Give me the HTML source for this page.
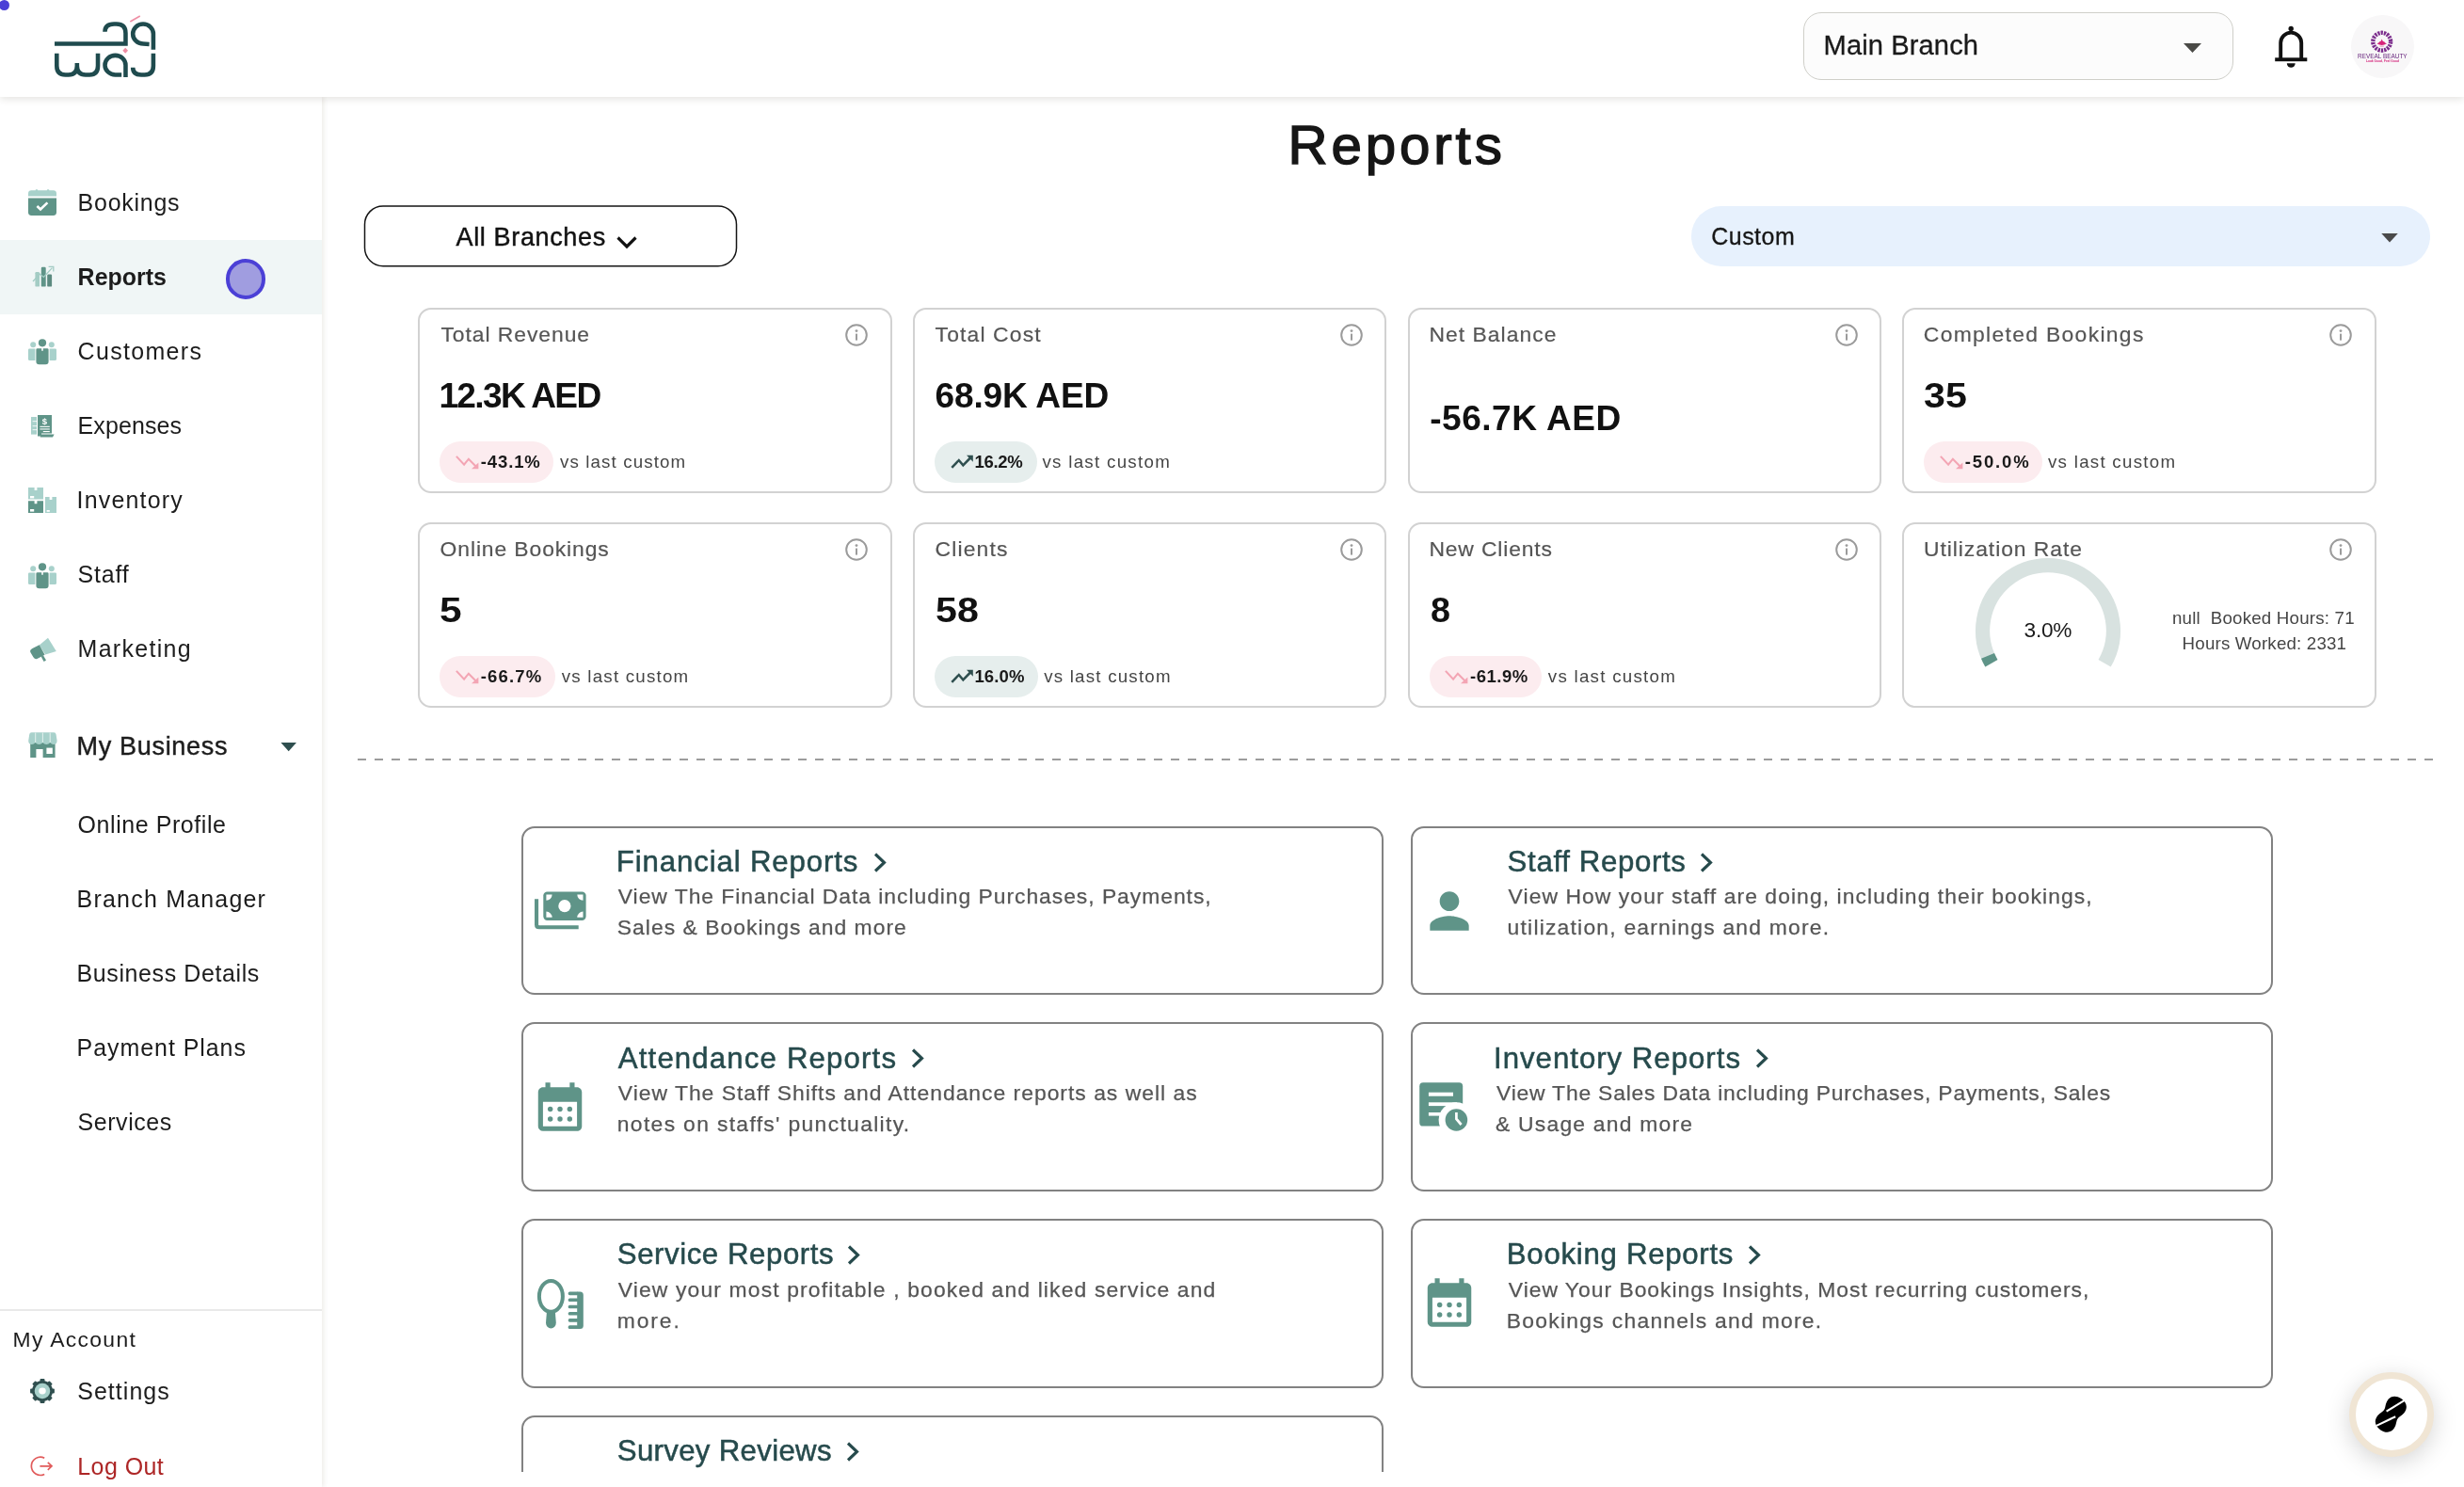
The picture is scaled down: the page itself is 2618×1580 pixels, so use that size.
<!DOCTYPE html>
<html lang="en">
<head>
<meta charset="utf-8">
<title>Reports</title>
<style>
*{box-sizing:border-box;margin:0;padding:0}
html,body{width:2618px;height:1580px;overflow:hidden;background:#fff}
body{font-family:"Liberation Sans",sans-serif;color:#1c1c1c}
#app{will-change:transform;position:relative;width:2618px;height:1580px;overflow:hidden;background:#fff}
.t{position:absolute;line-height:1;white-space:nowrap}
.abs{position:absolute}
#main{position:absolute;left:342px;top:103px;width:2276px;height:1461px;overflow:hidden}
#sidebar{position:absolute;left:0;top:103px;width:342px;height:1477px;background:#fff;box-shadow:2px 0 5px rgba(90,70,40,.10)}
#header{position:absolute;left:0;top:0;width:2618px;height:103px;background:#fff;box-shadow:0 2px 8px rgba(60,50,30,.14)}
.scard{position:absolute;width:503.4px;height:197px;border:2px solid #d2d2d2;border-radius:14px;background:#fff}
.rcard{position:absolute;width:916px;height:179.5px;border:2px solid #828282;border-radius:14px;background:#fff}
.badge{position:absolute;height:43.6px;border-radius:22px}
.badge.dn{background:#fcecef}
.badge.up{background:#e6eeed}
svg{position:absolute;overflow:visible}

</style>
</head>
<body>
<div id="app">
<!-- ======= MAIN SHAPES ======= -->
<svg style="left:386px;top:217px" width="399" height="68"><rect x="1.5" y="1.9" width="395" height="63.8" rx="19.5" fill="#fff" stroke="#151515" stroke-width="1.5"/></svg>
<svg style="left:655px;top:251px" width="22" height="13" viewBox="0 0 22 13"><path d="M1.5 1.5 L11 11 L20.5 1.5" fill="none" stroke="#111" stroke-width="3.2" stroke-linecap="butt" stroke-linejoin="miter"/></svg>
<div class="abs" style="left:1797px;top:219px;width:785px;height:64px;border-radius:32px;background:#e7f1fd"></div>
<svg style="left:2530px;top:247.6px" width="18" height="9.6" viewBox="0 0 20 11"><path d="M0 0 H20 L10 11 Z" fill="#4a4a4a"/></svg>

<!-- stat cards -->
<div class="scard" style="left:444.2px;top:327px"></div>
<div class="scard" style="left:970.0px;top:327px"></div>
<div class="scard" style="left:1495.8px;top:327px"></div>
<div class="scard" style="left:2021.4px;top:327px"></div>
<div class="scard" style="left:444.2px;top:555px"></div>
<div class="scard" style="left:970.0px;top:555px"></div>
<div class="scard" style="left:1495.8px;top:555px"></div>
<div class="scard" style="left:2021.4px;top:555px"></div>

<!-- info icons -->
<svg width="0" height="0"><defs>
<g id="info"><circle cx="12" cy="12" r="10.8" fill="none" stroke="#9b9b9b" stroke-width="2"/><circle cx="12" cy="7.6" r="1.4" fill="#9b9b9b"/><rect x="11" y="10.6" width="2" height="7" fill="#9b9b9b"/></g>
<g id="tdown"><path d="M0.9 0.9 L9.1 9.6 L13.9 3.7 L21.6 11.5" fill="none" stroke="#f3a5b4" stroke-width="2.1" stroke-linejoin="miter"/><path d="M24.4 7.4 V14.3 H17 Z" fill="#f3a5b4"/></g>
<g id="tup"><path d="M1.3 12.9 L8.8 5 L13.3 10.3 L21 2.5" fill="none" stroke="#2f4f4f" stroke-width="2.5" stroke-linejoin="miter"/><path d="M17 -0.3 H23.8 V6.7 Z" fill="#2f4f4f"/></g>
<g id="chev"><path d="M2 1.5 L11.5 10.5 L2 19.5" fill="none" stroke="#264a4c" stroke-width="3.1" stroke-linejoin="miter"/></g>
</defs></svg>
<svg style="left:898.3px;top:343.5px" width="24" height="24"><use href="#info"/></svg>
<svg style="left:1424.3px;top:343.5px" width="24" height="24"><use href="#info"/></svg>
<svg style="left:1949.8px;top:343.5px" width="24" height="24"><use href="#info"/></svg>
<svg style="left:2475.3px;top:343.5px" width="24" height="24"><use href="#info"/></svg>
<svg style="left:898.3px;top:571.5px" width="24" height="24"><use href="#info"/></svg>
<svg style="left:1424.3px;top:571.5px" width="24" height="24"><use href="#info"/></svg>
<svg style="left:1949.8px;top:571.5px" width="24" height="24"><use href="#info"/></svg>
<svg style="left:2475.3px;top:571.5px" width="24" height="24"><use href="#info"/></svg>

<!-- badges -->
<div class="badge dn" style="left:467.4px;top:469.3px;width:120.8px"></div>
<svg style="left:484px;top:483.5px" width="26" height="15"><use href="#tdown"/></svg>
<div class="badge up" style="left:993.4px;top:469.3px;width:108.6px"></div>
<svg style="left:1010px;top:483.5px" width="25" height="15"><use href="#tup"/></svg>
<div class="badge dn" style="left:2044.4px;top:469.3px;width:125.6px"></div>
<svg style="left:2061px;top:483.5px" width="26" height="15"><use href="#tdown"/></svg>
<div class="badge dn" style="left:467.4px;top:697.3px;width:123px"></div>
<svg style="left:484px;top:711.5px" width="26" height="15"><use href="#tdown"/></svg>
<div class="badge up" style="left:993.4px;top:697.3px;width:110px"></div>
<svg style="left:1010px;top:711.5px" width="25" height="15"><use href="#tup"/></svg>
<div class="badge dn" style="left:1518.8px;top:697.3px;width:119.6px"></div>
<svg style="left:1535.4px;top:711.5px" width="26" height="15"><use href="#tdown"/></svg>

<!-- gauge -->
<svg style="left:2090px;top:585px" width="172" height="130" viewBox="-86 -85 172 130">
<path d="M -60.1 34.7 A 69.4 69.4 0 1 1 60.1 34.7" fill="none" stroke="#d8e2e0" stroke-width="15.2"/>
<path d="M -60.1 34.7 A 69.4 69.4 0 0 1 -64.0 26.9" fill="none" stroke="#5f9488" stroke-width="15.2"/>
</svg>

<!-- dashed divider -->
<svg style="left:380px;top:806px" width="2206" height="3"><line x1="0" y1="1.1" x2="2205" y2="1.1" stroke="#9c9c9c" stroke-width="2" stroke-dasharray="9 9"/></svg>

<!-- report cards -->
<div class="rcard" style="left:554px;top:877.5px"></div>
<div class="rcard" style="left:1499px;top:877.5px"></div>
<div class="rcard" style="left:554px;top:1086.3px"></div>
<div class="rcard" style="left:1499px;top:1086.3px"></div>
<div class="rcard" style="left:554px;top:1295.1px"></div>
<div class="rcard" style="left:1499px;top:1295.1px"></div>
<div class="rcard" style="left:554px;top:1504px"></div>

<!-- chevrons -->
<svg style="left:927.6px;top:905.5px" width="14" height="21"><use href="#chev"/></svg>
<svg style="left:1806.4px;top:905.5px" width="14" height="21"><use href="#chev"/></svg>
<svg style="left:967.7px;top:1114.3px" width="14" height="21"><use href="#chev"/></svg>
<svg style="left:1864.9px;top:1114.3px" width="14" height="21"><use href="#chev"/></svg>
<svg style="left:900.3px;top:1323.1px" width="14" height="21"><use href="#chev"/></svg>
<svg style="left:1857px;top:1323.1px" width="14" height="21"><use href="#chev"/></svg>
<svg style="left:899.2px;top:1531.9px" width="14" height="21"><use href="#chev"/></svg>

<!-- ======= REPORT CARD ICONS ======= -->
<!-- financial -->
<svg style="left:568px;top:947px" width="56" height="42" viewBox="0 0 56 42">
<rect x="9.3" y="0.4" width="45.3" height="30.6" rx="4.2" fill="#5f9488"/>
<circle cx="31.9" cy="15.7" r="6.6" fill="#fff"/>
<path d="M12.4 3.6 h6.2 a6.2 6.2 0 0 1 -6.2 6.2 z M51.5 3.6 v6.2 a6.2 6.2 0 0 1 -6.2 -6.2 z M12.4 27.8 v-6.2 a6.2 6.2 0 0 1 6.2 6.2 z M51.5 27.8 h-6.2 a6.2 6.2 0 0 1 6.2 -6.2 z" fill="#fff"/>
<path d="M2.05 8.2 V35.4 Q2.05 38.2 4.9 38.2 H46.7" fill="none" stroke="#5f9488" stroke-width="4.1"/>
</svg>
<!-- staff person -->
<svg style="left:1509.4px;top:937.3px" width="62" height="62" viewBox="0 0 24 24"><path fill="#5f9488" d="M12 12c2.21 0 4-1.79 4-4s-1.79-4-4-4-4 1.79-4 4 1.79 4 4 4zm0 2c-2.67 0-8 1.34-8 4v2h16v-2c0-2.66-5.33-4-8-4z"/></svg>
<!-- calendars -->
<svg width="0" height="0"><defs><g id="cal">
<path fill="#5f9488" d="M19 4h-1V2h-2v2H8V2H6v2H5c-1.11 0-1.99.9-1.99 2L3 20a2 2 0 0 0 2 2h14c1.1 0 2-.9 2-2V6c0-1.1-.9-2-2-2zm0 16H5V10h14v10z"/>
<g fill="#5f9488"><circle cx="8" cy="13" r="1.05"/><circle cx="12" cy="13" r="1.05"/><circle cx="16" cy="13" r="1.05"/><circle cx="8" cy="17" r="1.05"/><circle cx="12" cy="17" r="1.05"/><circle cx="16" cy="17" r="1.05"/></g>
</g></defs></svg>
<svg style="left:564.3px;top:1145px" width="62" height="62" viewBox="0 0 24 24"><use href="#cal"/></svg>
<svg style="left:1509.3px;top:1353.3px" width="62" height="62" viewBox="0 0 24 24"><use href="#cal"/></svg>
<!-- inventory doc + clock -->
<svg style="left:1508px;top:1150px" width="54" height="54" viewBox="0 0 54 54">
<rect x="0.2" y="0.3" width="46" height="46.3" rx="3.9" fill="#5f9488"/>
<rect x="9.9" y="10.7" width="26.1" height="4" fill="#fff"/>
<rect x="9.9" y="21.3" width="30" height="3.8" fill="#fff"/>
<rect x="9.9" y="32" width="20" height="3.6" fill="#fff"/>
<circle cx="39.4" cy="40" r="18.8" fill="#fff"/>
<circle cx="39.4" cy="40" r="11.8" fill="#5f9488"/>
<path d="M39.4 32.1 V38.9 L44.6 45" fill="none" stroke="#fff" stroke-width="2.7"/>
</svg>
<!-- service: mirror + comb -->
<svg style="left:570px;top:1359px" width="52" height="54" viewBox="0 0 52 54">
<ellipse cx="15.4" cy="18.4" rx="12.5" ry="16.4" fill="none" stroke="#5f9488" stroke-width="4"/>
<path d="M11 34 H19.8 L20.8 46.6 A5.4 6 0 0 1 10 46.6 Z" fill="#5f9488"/>
<path d="M43.2 13.4 H46.3 Q49.8 13.4 49.8 16.9 V49.5 Q49.8 53 46.3 53 H43.2 Z" fill="#5f9488"/>
<g fill="#5f9488"><rect x="33.7" y="13.4" width="11" height="3.8" rx="1.6"/><rect x="33.7" y="20.5" width="11" height="3.6" rx="1.6"/><rect x="33.7" y="27.7" width="11" height="3.6" rx="1.6"/><rect x="33.7" y="34.9" width="11" height="3.6" rx="1.6"/><rect x="33.7" y="42.1" width="11" height="3.6" rx="1.6"/><rect x="33.7" y="49.2" width="11" height="3.8" rx="1.6"/></g>
</svg>

<!-- floating action button -->
<div class="abs" style="z-index:5;left:2496px;top:1458px;width:90px;height:90px;border-radius:50%;background:#fff;border:7px solid #f0e5d4;box-shadow:0 6px 26px rgba(0,0,0,.17)"></div>
<svg style="z-index:6;left:2520px;top:1480px" width="42" height="46" viewBox="0 0 42 46">
<g transform="translate(20.3 22.7) rotate(33)">
<path d="M0 -20 C7.5 -20 11 -15.5 11 -10.5 C11 -5.5 8.6 -3.5 8.6 0 C8.6 3.5 11 5.5 11 10.5 C11 15.5 7.5 20 0 20 C-7.5 20 -11 15.5 -11 10.5 C-11 5.5 -8.6 3.5 -8.6 0 C-8.6 -3.5 -11 -5.5 -11 -10.5 C-11 -15.5 -7.5 -20 0 -20 Z" fill="#000"/>
</g>
<path d="M15.6 19.6 L36 7.2 M5 34.9 L25.2 25.2" stroke="#fff" stroke-width="2.1" fill="none"/>
</svg>

<!-- bottom clip strip for main area -->
<div class="abs" style="left:352px;top:1564px;width:2266px;height:16px;background:#fff"></div>

<!-- ======= SIDEBAR ======= -->
<div id="sidebar"></div>
<div class="abs" style="left:0;top:255px;width:342px;height:79px;background:#f0f6f6"></div>
<div class="abs" style="left:0;top:1391px;width:342px;height:2px;background:#e9e9e9"></div>
<div class="abs" style="left:239.5px;top:275px;width:42.6px;height:42.6px;border-radius:50%;background:#a09de0;border:4.8px solid #4b40d6"></div>

<!-- bookings icon -->
<svg style="left:30px;top:201px" width="30" height="29" viewBox="0 0 30 29">
<path d="M3.4 1.2 H26.6 Q30 1.2 30 4.6 V7.6 H0 V4.6 Q0 1.2 3.4 1.2 Z" fill="#a8d1cb"/>
<rect x="7.6" y="0.2" width="2.6" height="2" rx="1" fill="#a8d1cb"/><rect x="19.8" y="0.2" width="2.6" height="2" rx="1" fill="#a8d1cb"/>
<path d="M0 9.4 H30 V24.6 Q30 28 26.6 28 H3.4 Q0 28 0 24.6 Z" fill="#5f9488"/>
<path d="M9.4 18 L13 21.4 L20.4 14.4" fill="none" stroke="#fff" stroke-width="2.6"/>
</svg>
<!-- reports icon -->
<svg style="left:34px;top:282px" width="26" height="24" viewBox="0 0 26 24">
<rect x="3.4" y="7" width="4.6" height="15.6" rx="1.2" fill="#a3ccc4"/>
<rect x="9.8" y="1.8" width="4.9" height="20.8" rx="1.2" fill="#5f9488"/>
<rect x="16.2" y="9.6" width="4.9" height="13" rx="1.2" fill="#5c8a80"/>
<path d="M1 17 L8.4 9.2 L12.4 12.4 L21.4 2.6" fill="none" stroke="#a3ccc4" stroke-width="1.3"/>
<path d="M17.6 1.4 H22.8 V6.6" fill="none" stroke="#a3ccc4" stroke-width="1.3"/>
</svg>
<!-- people icon -->
<svg width="0" height="0"><defs><g id="people">
<circle cx="5.2" cy="6.2" r="3" fill="#a8d1cb"/><circle cx="24.8" cy="6.2" r="3" fill="#a8d1cb"/>
<path d="M0 11.6 Q0 10.4 1.2 10.4 H7.4 V23 H1.6 Q0 23 0 21.4 Z" fill="#a8d1cb"/>
<path d="M30 11.6 Q30 10.4 28.8 10.4 H22.6 V23 H28.4 Q30 23 30 21.4 Z" fill="#a8d1cb"/>
<circle cx="15" cy="4.3" r="4.1" fill="#5f9488"/>
<path d="M8.4 11.6 Q8.4 10.2 9.8 10.2 H14.2 V12.8 H15.8 V10.2 H20.2 Q21.6 10.2 21.6 11.6 V24 Q21.6 27.2 18.4 27.2 H11.6 Q8.4 27.2 8.4 24 Z" fill="#5f9488"/>
</g></defs></svg>
<svg style="left:30px;top:359.7px" width="30" height="28" viewBox="0 0 30 28"><use href="#people"/></svg>
<svg style="left:30px;top:597.9px" width="30" height="28" viewBox="0 0 30 28"><use href="#people"/></svg>
<!-- expenses icon -->
<svg style="left:33px;top:441px" width="25" height="24" viewBox="0 0 25 24">
<rect x="0" y="2" width="6" height="18.6" fill="#a8d1cb"/>
<rect x="1.6" y="6" width="4.4" height="1.2" fill="#fff" opacity=".7"/><rect x="1.6" y="11" width="4.4" height="1.2" fill="#fff" opacity=".7"/><rect x="1.6" y="15" width="4.4" height="1.2" fill="#fff" opacity=".7"/>
<path d="M7 0 H22 V19.6 H11 V22.6 H7 Z" fill="#5f9488"/>
<path d="M10.6 20.4 H24.6 L23 23.4 H9.6 Z" fill="#5f9488"/>
<rect x="9.4" y="11.8" width="10.4" height="1.1" fill="#fff"/><rect x="9.4" y="14.4" width="10.4" height="1.1" fill="#fff"/><rect x="12.8" y="17" width="7" height="1.1" fill="#fff"/>
<text x="14.5" y="9.6" font-family="Liberation Sans, sans-serif" font-size="9.5" font-weight="700" fill="#fff" text-anchor="middle">$</text>
</svg>
<!-- inventory icon -->
<svg style="left:30px;top:518px" width="30" height="27" viewBox="0 0 30 27">
<path d="M0 0 H6.6 V3 H9.4 V0 H16 V12.6 H0 Z" fill="#a8d1cb"/><rect x="2" y="9" width="4.2" height="2.4" fill="#fff"/>
<path d="M0 14.2 H6.6 V17.2 H9.4 V14.2 H16 V27 H0 Z" fill="#5f9488"/><rect x="2" y="23" width="4.2" height="2.6" fill="#fff"/>
<path d="M18 10 H22.6 V13 H25.4 V10 H30 V27 H18 Z" fill="#a8d1cb"/><rect x="19.6" y="24" width="3.2" height="1.8" fill="#fff"/>
</svg>
<!-- marketing icon -->
<svg style="left:31px;top:677px" width="30" height="28" viewBox="0 0 30 28">
<path d="M10.8 8.6 L20 0.8 L28.8 15 L17.2 18.4 Z" fill="#a8d1cb"/>
<path d="M3.4 12 L10.8 8.2 L16.6 18.8 L9.4 22.6 Q6.4 24.2 4.4 21.2 L1.6 16.6 Q0 13.8 3.4 12 Z" fill="#5f9488"/>
<path d="M12.6 20.6 L15 19.4 L18 24.6 L15.6 26 Z" fill="#5f9488"/>
</svg>
<!-- my business icon -->
<svg style="left:29.5px;top:777.6px" width="31" height="28" viewBox="0 0 31 28">
<path d="M2.2 11 H28.6 V27 H15.6 V18 H8.4 V27 H2.2 Z" fill="#5f9488"/>
<rect x="19.4" y="16.6" width="6.4" height="6.4" fill="#fff"/>
<path d="M3.6 0.2 H27.2 Q29.4 0.2 29.6 2.4 L30.6 9 Q30.6 13 27 13 Q24.8 13 23.2 11 Q21.6 13 19.4 13 Q17 13 15.4 11 Q13.8 13 11.4 13 Q9.2 13 7.6 11 Q6 13 3.8 13 Q0.2 13 0.2 9 L1.2 2.4 Q1.4 0.2 3.6 0.2 Z" fill="#a8d1cb"/>
<path d="M7.7 0.6 V11 M15.4 0.6 V11 M23.2 0.6 V11" stroke="#fff" stroke-width="0.9" opacity=".75"/>
</svg>
<svg style="left:297.7px;top:788.7px" width="17.4" height="9.2" viewBox="0 0 18 10"><path d="M0 0 H18 L9 10 Z" fill="#2f4f4f"/></svg>
<!-- settings icon -->
<svg style="left:32px;top:1465.2px" width="26" height="26" viewBox="-13.5 -13.5 27 27">
<g fill="#2f4f4f"><circle r="11.4"/>
<rect x="-2.6" y="-13.4" width="5.2" height="5" rx="1"/><rect x="-2.6" y="8.4" width="5.2" height="5" rx="1"/>
<rect x="-2.6" y="-13.4" width="5.2" height="5" rx="1" transform="rotate(45)"/><rect x="-2.6" y="8.4" width="5.2" height="5" rx="1" transform="rotate(45)"/>
<rect x="-2.6" y="-13.4" width="5.2" height="5" rx="1" transform="rotate(90)"/><rect x="-2.6" y="8.4" width="5.2" height="5" rx="1" transform="rotate(90)"/>
<rect x="-2.6" y="-13.4" width="5.2" height="5" rx="1" transform="rotate(135)"/><rect x="-2.6" y="8.4" width="5.2" height="5" rx="1" transform="rotate(135)"/></g>
<circle r="8.6" fill="#a8d1cb"/><ellipse rx="3.9" ry="3.6" fill="#fff"/>
</svg>
<!-- logout icon -->
<svg style="left:33px;top:1546px" width="24" height="24" viewBox="0 0 24 24">
<path d="M14.2 3.2 A9.6 9.6 0 1 0 14.2 20.4" fill="none" stroke="#e15b5b" stroke-width="1.7"/>
<path d="M9.4 11.8 H22 M17.8 7.8 L22 11.8 L17.8 15.8" fill="none" stroke="#e15b5b" stroke-width="1.7"/>
</svg>

<!-- ======= HEADER ======= -->
<div id="header"></div>
<div class="abs" style="left:-1px;top:-0.5px;width:11px;height:11px;border-radius:50%;background:#4b40d6"></div>
<!-- logo -->
<svg style="left:50px;top:10px" width="130" height="85" viewBox="0 0 2274 1487">
<g fill="none" stroke="#1f4b4e" stroke-width="80" stroke-linejoin="miter">
<path d="M140 638 H1460 V440 Q1460 270 1290 270 H1245 Q1075 270 1075 415"/>
<path d="M1975 748 V455 A190 185 0 1 0 1785 640 L1900 646"/>
<path d="M180 820 V1050 Q180 1215 340 1215 H400 Q557 1215 557 1050 V995 M557 1050 Q557 1215 715 1215 H790 Q945 1215 945 1050 V820"/>
<path d="M1460 1258 V1035 A192 180 0 1 0 1268 1215 H1385"/>
<path d="M1975 820 V1050 Q1975 1215 1815 1215 H1750 Q1595 1215 1595 1080"/>
</g>
<path d="M1545 228 L1728 122" stroke="#ef8fa5" stroke-width="30" fill="none"/>
<path d="M1455 713 L1505 765 L1455 817 L1405 765 Z" fill="#ef8fa5"/>
</svg>
<!-- main branch select -->
<div class="abs" style="left:1916px;top:13px;width:457px;height:72px;border:1.5px solid #cfcfc9;border-radius:19px;background:#fcfcfc"></div>
<svg style="left:2319.6px;top:45.5px" width="19" height="10" viewBox="0 0 19 10"><path d="M0 0 H19 L9.5 10 Z" fill="#4a4a46"/></svg>
<!-- bell -->
<svg style="left:2415px;top:26px" width="38" height="48" viewBox="0 0 38 48">
<circle cx="19.2" cy="4.4" r="2.7" fill="#111"/>
<path d="M8.2 36 V19.6 A11 11 0 0 1 30.2 19.6 V36" fill="none" stroke="#111" stroke-width="3.9"/>
<rect x="2.2" y="35.3" width="34.1" height="3.9" fill="#111"/>
<path d="M14.8 41.2 H23.7 A4.45 4.5 0 0 1 14.8 41.2 Z" fill="#111"/>
</svg>
<!-- avatar -->
<svg style="left:2497.9px;top:15.7px" width="67" height="67" viewBox="0 0 67 67">
<circle cx="33.5" cy="33.5" r="33.5" fill="#f8f7f8"/>
<circle cx="32.7" cy="28.2" r="9.4" fill="none" stroke="#7b2d8c" stroke-width="4.4" stroke-dasharray="2.3 1.0"/>
<path d="M27.4 30.2 Q29.6 29.8 30.4 28 Q31.6 29 32.7 25.6 Q33.8 29 35 28 Q35.8 29.8 38 30.2 Q35.4 32 32.7 32 Q30 32 27.4 30.2 Z" fill="#d6247a"/>
<rect x="30.6" y="32.6" width="4.2" height="1" fill="#e58ab5"/>
<text x="33.3" y="46.1" text-anchor="middle" font-family="Liberation Sans, sans-serif" font-size="7.1" fill="#621c78" textLength="52.6" lengthAdjust="spacingAndGlyphs">REVEAL BEAUTY</text>
<text x="33.4" y="50.3" text-anchor="middle" font-family="Liberation Sans, sans-serif" font-size="3.9" font-weight="700" fill="#d4237a" textLength="35" lengthAdjust="spacingAndGlyphs">Look Good, Feel Good</text>
</svg>

<div class="t" style="left:1937.6px;top:34.4px;font-size:29.12px;color:#1a1a1a;letter-spacing:0.10px;-webkit-text-stroke:0.3px #1a1a1a;">Main Branch</div>
<div class="t" style="left:82.6px;top:203.2px;font-size:24.96px;letter-spacing:0.76px;">Bookings</div>
<div class="t" style="left:82.6px;top:282.2px;font-size:24.96px;font-weight:700;letter-spacing:0.02px;">Reports</div>
<div class="t" style="left:82.6px;top:361.2px;font-size:24.96px;letter-spacing:1.34px;">Customers</div>
<div class="t" style="left:82.6px;top:440.2px;font-size:24.96px;letter-spacing:0.12px;">Expenses</div>
<div class="t" style="left:81.6px;top:519.2px;font-size:24.96px;letter-spacing:1.19px;">Inventory</div>
<div class="t" style="left:82.6px;top:598.2px;font-size:24.96px;letter-spacing:0.83px;">Staff</div>
<div class="t" style="left:82.6px;top:677.2px;font-size:24.96px;letter-spacing:1.30px;">Marketing</div>
<div class="t" style="left:81.6px;top:779.8px;font-size:27.04px;letter-spacing:0.66px;-webkit-text-stroke:0.45px #1c1c1c;">My Business</div>
<div class="t" style="left:82.6px;top:863.8px;font-size:24.96px;letter-spacing:0.58px;">Online Profile</div>
<div class="t" style="left:81.6px;top:942.8px;font-size:24.96px;letter-spacing:1.22px;">Branch Manager</div>
<div class="t" style="left:81.6px;top:1021.8px;font-size:24.96px;letter-spacing:0.62px;">Business Details</div>
<div class="t" style="left:81.6px;top:1100.8px;font-size:24.96px;letter-spacing:0.96px;">Payment Plans</div>
<div class="t" style="left:82.6px;top:1179.8px;font-size:24.96px;letter-spacing:0.56px;">Services</div>
<div class="t" style="left:13.6px;top:1411.8px;font-size:22.88px;letter-spacing:1.33px;">My Account</div>
<div class="t" style="left:82.2px;top:1466.2px;font-size:24.96px;letter-spacing:1.06px;">Settings</div>
<div class="t" style="left:82.2px;top:1545.6px;font-size:24.96px;color:#ad2626;letter-spacing:0.47px;">Log Out</div>
<div class="t" style="left:1368.6px;top:125.4px;font-size:58.24px;color:#161616;letter-spacing:3.88px;-webkit-text-stroke:1.5px #161616;">Reports</div>
<div class="t" style="left:484.6px;top:238.6px;font-size:27.04px;color:#111;letter-spacing:0.62px;-webkit-text-stroke:0.45px #111;">All Branches</div>
<div class="t" style="left:1818.2px;top:239.0px;font-size:24.96px;color:#161616;letter-spacing:0.52px;-webkit-text-stroke:0.3px #161616;">Custom</div>
<div class="t" style="left:468.4px;top:344.3px;font-size:22.88px;color:#555555;letter-spacing:0.95px;-webkit-text-stroke:0.2px #555555;">Total Revenue</div>
<div class="t" style="left:993.6px;top:344.3px;font-size:22.88px;color:#555555;letter-spacing:1.14px;-webkit-text-stroke:0.2px #555555;">Total Cost</div>
<div class="t" style="left:1518.4px;top:344.3px;font-size:22.88px;color:#555555;letter-spacing:1.04px;-webkit-text-stroke:0.2px #555555;">Net Balance</div>
<div class="t" style="left:2043.8px;top:344.3px;font-size:22.88px;color:#555555;letter-spacing:1.32px;-webkit-text-stroke:0.2px #555555;">Completed Bookings</div>
<div class="t" style="left:467.6px;top:572.3px;font-size:22.88px;color:#555555;letter-spacing:0.90px;-webkit-text-stroke:0.2px #555555;">Online Bookings</div>
<div class="t" style="left:993.6px;top:572.3px;font-size:22.88px;color:#555555;letter-spacing:1.15px;-webkit-text-stroke:0.2px #555555;">Clients</div>
<div class="t" style="left:1518.4px;top:572.3px;font-size:22.88px;color:#555555;letter-spacing:0.86px;-webkit-text-stroke:0.2px #555555;">New Clients</div>
<div class="t" style="left:2044.0px;top:572.3px;font-size:22.88px;color:#555555;letter-spacing:0.94px;-webkit-text-stroke:0.2px #555555;">Utilization Rate</div>
<div class="t" style="left:466.4px;top:402.4px;font-size:37.08px;font-weight:700;color:#111111;letter-spacing:-1.67px;">12.3K AED</div>
<div class="t" style="left:993.6px;top:402.4px;font-size:37.08px;font-weight:700;color:#111111;letter-spacing:-0.19px;">68.9K AED</div>
<div class="t" style="left:1519.2px;top:425.9px;font-size:37.08px;font-weight:700;color:#111111;letter-spacing:0.50px;">-56.7K AED</div>
<div class="t" style="left:2043.8px;top:402.4px;font-size:37.08px;font-weight:700;color:#111111;transform:scaleX(1.1103);transform-origin:0 0;">35</div>
<div class="t" style="left:467.4px;top:630.3px;font-size:37.08px;font-weight:700;color:#111111;transform:scaleX(1.1442);transform-origin:0 0;">5</div>
<div class="t" style="left:993.6px;top:630.3px;font-size:37.08px;font-weight:700;color:#111111;transform:scaleX(1.1103);transform-origin:0 0;">58</div>
<div class="t" style="left:1520.2px;top:630.3px;font-size:37.08px;font-weight:700;color:#111111;transform:scaleX(1.0182);transform-origin:0 0;">8</div>
<div class="t" style="left:510.8px;top:482.0px;font-size:18.54px;font-weight:700;color:#1a1a1a;letter-spacing:0.86px;">-43.1%</div>
<div class="t" style="left:595.0px;top:481.9px;font-size:18.72px;color:#454545;letter-spacing:1.12px;">vs last custom</div>
<div class="t" style="left:1035.4px;top:482.0px;font-size:18.54px;font-weight:700;color:#1a1a1a;letter-spacing:-0.29px;">16.2%</div>
<div class="t" style="left:1107.4px;top:481.9px;font-size:18.72px;color:#454545;letter-spacing:1.30px;">vs last custom</div>
<div class="t" style="left:2087.8px;top:482.0px;font-size:18.54px;font-weight:700;color:#1a1a1a;letter-spacing:1.82px;">-50.0%</div>
<div class="t" style="left:2176.0px;top:481.9px;font-size:18.72px;color:#454545;letter-spacing:1.27px;">vs last custom</div>
<div class="t" style="left:510.8px;top:710.0px;font-size:18.54px;font-weight:700;color:#1a1a1a;letter-spacing:1.14px;">-66.7%</div>
<div class="t" style="left:596.8px;top:709.9px;font-size:18.72px;color:#454545;letter-spacing:1.22px;">vs last custom</div>
<div class="t" style="left:1035.4px;top:710.0px;font-size:18.54px;font-weight:700;color:#1a1a1a;letter-spacing:0.11px;">16.0%</div>
<div class="t" style="left:1109.2px;top:709.9px;font-size:18.72px;color:#454545;letter-spacing:1.22px;">vs last custom</div>
<div class="t" style="left:1562.0px;top:710.0px;font-size:18.54px;font-weight:700;color:#1a1a1a;letter-spacing:0.50px;">-61.9%</div>
<div class="t" style="left:1644.8px;top:709.9px;font-size:18.72px;color:#454545;letter-spacing:1.27px;">vs last custom</div>
<div class="t" style="left:2150.6px;top:658.1px;font-size:22.66px;color:#1a1a1a;letter-spacing:-0.28px;">3.0%</div>
<div class="t" style="left:2308.0px;top:647.8px;font-size:18.72px;color:#454545;letter-spacing:0.21px;white-space:pre;">null  Booked Hours: 71</div>
<div class="t" style="left:2318.6px;top:674.9px;font-size:18.72px;color:#454545;letter-spacing:0.19px;">Hours Worked: 2331</div>
<div class="t" style="left:654.8px;top:899.7px;font-size:31.2px;color:#264a4c;letter-spacing:0.87px;-webkit-text-stroke:0.5px #264a4c;">Financial Reports</div>
<div class="t" style="left:656.8px;top:941.3px;font-size:22.88px;color:#555555;letter-spacing:0.96px;-webkit-text-stroke:0.25px #555555;">View The Financial Data including Purchases, Payments,</div>
<div class="t" style="left:655.8px;top:974.3px;font-size:22.88px;color:#555555;letter-spacing:1.03px;-webkit-text-stroke:0.25px #555555;">Sales &amp; Bookings and more</div>
<div class="t" style="left:656.8px;top:1108.5px;font-size:31.2px;color:#264a4c;letter-spacing:1.15px;-webkit-text-stroke:0.5px #264a4c;">Attendance Reports</div>
<div class="t" style="left:656.8px;top:1150.1px;font-size:22.88px;color:#555555;letter-spacing:1.00px;-webkit-text-stroke:0.25px #555555;">View The Staff Shifts and Attendance reports as well as</div>
<div class="t" style="left:655.8px;top:1183.1px;font-size:22.88px;color:#555555;letter-spacing:1.33px;-webkit-text-stroke:0.25px #555555;">notes on staffs' punctuality.</div>
<div class="t" style="left:655.8px;top:1317.3px;font-size:31.2px;color:#264a4c;letter-spacing:0.57px;-webkit-text-stroke:0.5px #264a4c;">Service Reports</div>
<div class="t" style="left:656.8px;top:1358.9px;font-size:22.88px;color:#555555;letter-spacing:1.14px;-webkit-text-stroke:0.25px #555555;">View your most profitable , booked and liked service and</div>
<div class="t" style="left:655.8px;top:1391.9px;font-size:22.88px;color:#555555;letter-spacing:1.88px;-webkit-text-stroke:0.25px #555555;">more.</div>
<div class="t" style="left:655.8px;top:1526.1px;font-size:31.2px;color:#264a4c;letter-spacing:0.32px;-webkit-text-stroke:0.5px #264a4c;">Survey Reviews</div>
<div class="t" style="left:1601.6px;top:899.7px;font-size:31.2px;color:#264a4c;letter-spacing:0.66px;-webkit-text-stroke:0.5px #264a4c;">Staff Reports</div>
<div class="t" style="left:1602.6px;top:941.3px;font-size:22.88px;color:#555555;letter-spacing:1.07px;-webkit-text-stroke:0.25px #555555;">View How your staff are doing, including their bookings,</div>
<div class="t" style="left:1601.6px;top:974.3px;font-size:22.88px;color:#555555;letter-spacing:1.21px;-webkit-text-stroke:0.25px #555555;">utilization, earnings and more.</div>
<div class="t" style="left:1587.0px;top:1108.5px;font-size:31.2px;color:#264a4c;letter-spacing:0.99px;-webkit-text-stroke:0.5px #264a4c;">Inventory Reports</div>
<div class="t" style="left:1590.0px;top:1150.1px;font-size:22.88px;color:#555555;letter-spacing:0.80px;-webkit-text-stroke:0.25px #555555;">View The Sales Data including Purchases, Payments, Sales</div>
<div class="t" style="left:1589.0px;top:1183.1px;font-size:22.88px;color:#555555;letter-spacing:1.22px;-webkit-text-stroke:0.25px #555555;">&amp; Usage and more</div>
<div class="t" style="left:1600.8px;top:1317.3px;font-size:31.2px;color:#264a4c;letter-spacing:0.72px;-webkit-text-stroke:0.5px #264a4c;">Booking Reports</div>
<div class="t" style="left:1602.8px;top:1358.9px;font-size:22.88px;color:#555555;letter-spacing:0.99px;-webkit-text-stroke:0.25px #555555;">View Your Bookings Insights, Most recurring customers,</div>
<div class="t" style="left:1600.8px;top:1391.9px;font-size:22.88px;color:#555555;letter-spacing:1.27px;-webkit-text-stroke:0.25px #555555;">Bookings channels and more.</div>
</div>
<script>
(function(){var w=window.innerWidth||2618,s=w/2618;if(Math.abs(s-1)>0.002){var a=document.getElementById('app'),b=document.body,h=document.documentElement;a.style.zoom=s;b.style.width=h.style.width=(2618*s)+'px';b.style.height=h.style.height=(1580*s)+'px';}})();
</script>
</body>
</html>
